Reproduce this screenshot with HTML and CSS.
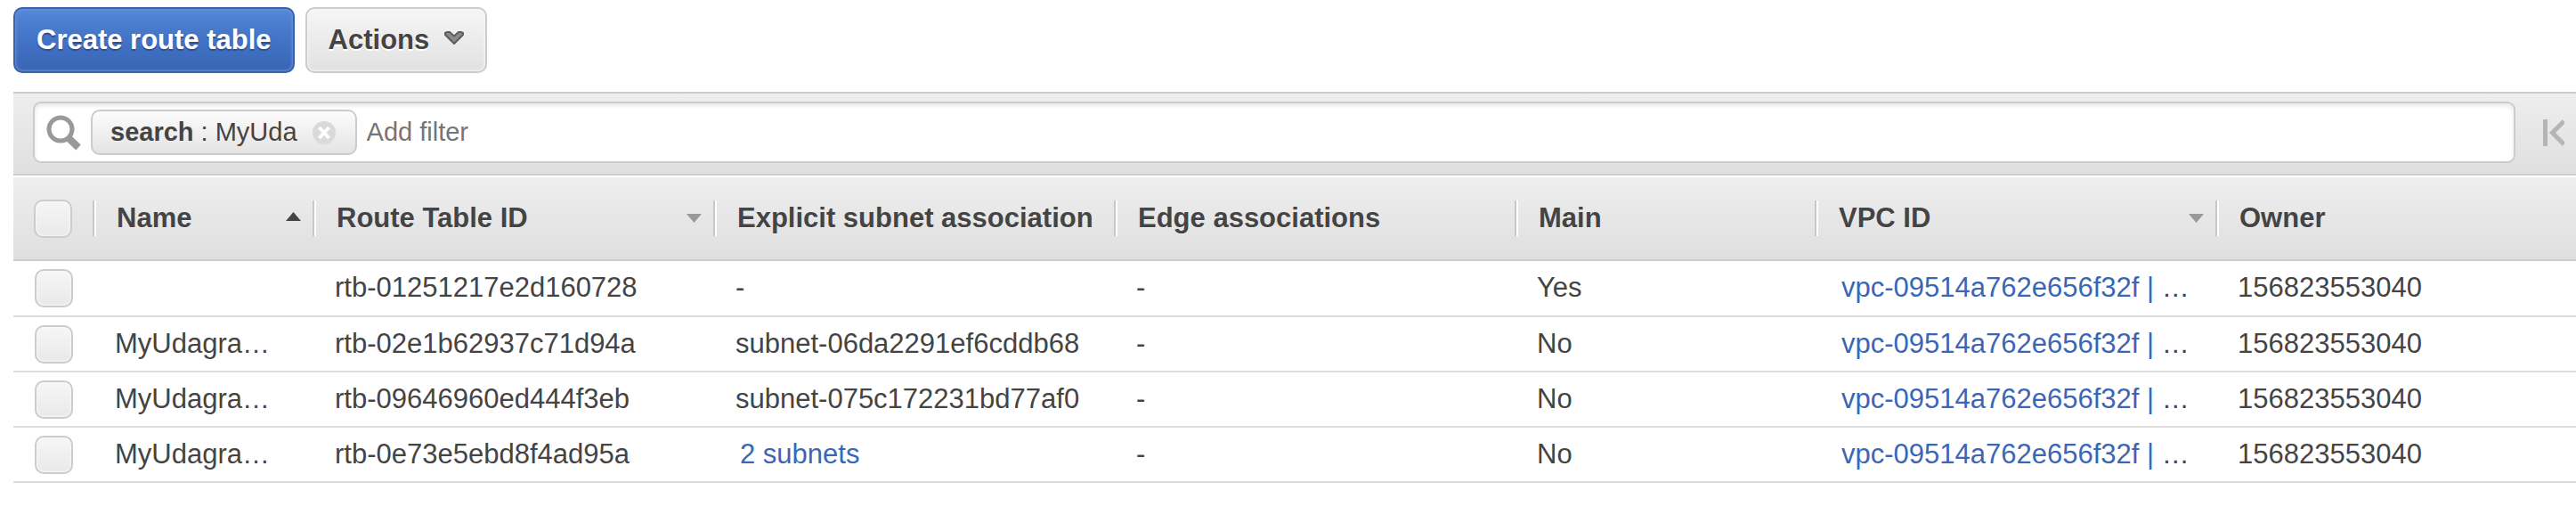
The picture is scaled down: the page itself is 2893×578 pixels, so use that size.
FILE: index.html
```html
<!DOCTYPE html>
<html lang="en">
<head>
<meta charset="utf-8">
<title>Route tables</title>
<link rel="stylesheet" href="styles.css">
</head>
<body>
<main class="console">
  <div class="actions">
    <button type="button" class="btn btn-primary">Create route table</button>
    <button type="button" class="btn btn-default">Actions
      <svg class="chevron" viewBox="0 0 22 15" aria-hidden="true"><path d="M1 2 L3 1 L6 1 L11 5.500 L16 1 L19 1 L21 2 L21 4 L11 14 L1 4 Z"/></svg>
    </button>
  </div>

  <div class="filter-bar">
    <div class="search-box">
      <svg class="magnifier" viewBox="0 0 40 40" aria-hidden="true"><circle cx="16" cy="16" r="13"/><path class="handle" d="M25 26 L36 36.500"/></svg>
      <span class="chip"><span class="chip-text"><b>search</b> : MyUda</span>
        <button type="button" class="chip-remove" aria-label="Remove filter">
          <svg viewBox="0 0 26 26" aria-hidden="true"><circle cx="13" cy="13" r="13"/><path d="M7.500 7 L18.500 19 M18.500 7 L7.500 19"/></svg>
        </button>
      </span>
      <input class="filter-input" type="text" placeholder="Add filter" aria-label="Add filter">
    </div>
    <button type="button" class="pager" aria-label="First page">
      <svg viewBox="0 0 24 30" aria-hidden="true"><path d="M2.500 0 V30"/><path d="M23.500 2 L10.500 15 L23.500 28"/></svg>
    </button>
  </div>

  <table class="grid">
    <colgroup>
      <col class="col-check"><col class="col-name"><col class="col-wide"><col class="col-wide"><col class="col-wide"><col class="col-main"><col class="col-wide"><col>
    </colgroup>
    <thead>
      <tr>
        <th class="check-cell"><input type="checkbox" class="check" aria-label="Select all"></th>
        <th><button type="button" class="head"><span class="label">Name</span><svg class="sort sorted" viewBox="0 0 17 10" aria-hidden="true"><path d="M0 10 L8.500 0 L17 10 Z"/></svg></button></th>
        <th><button type="button" class="head"><span class="label">Route Table ID</span><svg class="sort" viewBox="0 0 17 10" aria-hidden="true"><path d="M0 0 H17 L8.500 10 Z"/></svg></button></th>
        <th><div class="head plain"><span class="label">Explicit subnet associations</span></div></th>
        <th><div class="head plain"><span class="label">Edge associations</span></div></th>
        <th><div class="head plain"><span class="label">Main</span></div></th>
        <th><button type="button" class="head"><span class="label">VPC ID</span><svg class="sort" viewBox="0 0 17 10" aria-hidden="true"><path d="M0 0 H17 L8.500 10 Z"/></svg></button></th>
        <th><div class="head plain"><span class="label">Owner</span></div></th>
      </tr>
    </thead>
    <tbody>
      <tr>
        <td class="check-cell"><input type="checkbox" class="check" aria-label="Select rtb-01251217e2d160728"></td>
        <td></td><td>rtb-01251217e2d160728</td><td>-</td><td>-</td><td>Yes</td>
        <td><a href="#vpc">vpc-09514a762e656f32f |</a> …</td><td>156823553040</td>
      </tr>
      <tr>
        <td class="check-cell"><input type="checkbox" class="check" aria-label="Select rtb-02e1b62937c71d94a"></td>
        <td>MyUdagra…</td><td>rtb-02e1b62937c71d94a</td><td>subnet-06da2291ef6cddb68</td><td>-</td><td>No</td>
        <td><a href="#vpc">vpc-09514a762e656f32f |</a> …</td><td>156823553040</td>
      </tr>
      <tr>
        <td class="check-cell"><input type="checkbox" class="check" aria-label="Select rtb-09646960ed444f3eb"></td>
        <td>MyUdagra…</td><td>rtb-09646960ed444f3eb</td><td>subnet-075c172231bd77af0</td><td>-</td><td>No</td>
        <td><a href="#vpc">vpc-09514a762e656f32f |</a> …</td><td>156823553040</td>
      </tr>
      <tr>
        <td class="check-cell"><input type="checkbox" class="check" aria-label="Select rtb-0e73e5ebd8f4ad95a"></td>
        <td>MyUdagra…</td><td>rtb-0e73e5ebd8f4ad95a</td><td><a href="#subnets">2 subnets</a></td><td>-</td><td>No</td>
        <td><a href="#vpc">vpc-09514a762e656f32f |</a> …</td><td>156823553040</td>
      </tr>
    </tbody>
  </table>
</main>
</body>
</html>
```
FILE: styles.css
```css
* { box-sizing: border-box; }

body {
  margin: 0;
  background: #fff;
  color: #444;
  font: 31px/36px "Liberation Sans", Arial, sans-serif;
}

button, input { font: inherit; color: inherit; }

.console { padding: 8px 0 0 15px; }

.actions {
  display: flex;
  gap: 12px;
  margin-bottom: 21px;
}

.btn {
  display: flex;
  align-items: center;
  height: 74px;
  padding: 0 24px;
  border: 2px solid #ccc;
  border-radius: 10px;
  font-weight: bold;
  white-space: nowrap;
}

.btn-primary {
  background: linear-gradient(#5488d8, #4475c8 45%, #3864b4);
  border-color: #3862ae;
  box-shadow: inset 0 0 3px 1px #6a94da;
  color: #fff;
  text-shadow: 0 2px 1px #2a4f94;
}

.btn-default {
  gap: 17px;
  background: linear-gradient(#f6f6f6, #e1e1e1);
  box-shadow: inset 0 0 2px 1px #f7f7f7;
  text-shadow: 0 2px 0 #fff;
}

.chevron {
  width: 22px;
  height: 15px;
  margin-bottom: 5px;
  fill: #8a8a8a;
  stroke: #5c5c5c;
  stroke-width: 2;
}

.filter-bar {
  display: flex;
  align-items: flex-start;
  height: 94px;
  padding: 9px 13px 0 22px;
  border-top: 2px solid #ccc;
  border-bottom: 2px solid #ccc;
  background: linear-gradient(#eee, #dfdfdf);
}

.search-box {
  display: flex;
  flex: 1;
  align-items: center;
  height: 69px;
  padding-left: 13px;
  border: 2px solid #ccc;
  border-radius: 9px;
  background: #fff;
  box-shadow: inset 0 3px 5px #e8e8e8;
  font-size: 29px;
}

.magnifier {
  width: 40px;
  height: 40px;
  margin-right: 10px;
  fill: none;
  stroke: #999;
  stroke-width: 5;
}

.magnifier .handle { stroke-width: 8; }

.chip {
  display: flex;
  align-items: center;
  gap: 17px;
  height: 51px;
  padding: 0 22px 0 20px;
  border: 2px solid #ccc;
  border-radius: 10px;
  background: linear-gradient(#fcfcfc, #e4e4e4);
  white-space: nowrap;
}

.chip-text { padding-bottom: 2px; }

.chip-remove {
  display: flex;
  padding: 0;
  border: 0;
  background: none;
}

.chip-remove svg {
  width: 26px;
  height: 26px;
  fill: #dadada;
  stroke: #fff;
  stroke-width: 4;
}

.chip-remove circle { stroke: none; }

.filter-input {
  flex: 1;
  min-width: 0;
  padding: 0 11px 2px;
  border: 0;
  outline: 0;
  background: none;
}

.filter-input::placeholder { color: #757575; opacity: 1; }

.pager {
  display: flex;
  margin: 20px 0 0 31px;
  padding: 0;
  border: 0;
  background: none;
}

.pager svg {
  width: 24px;
  height: 30px;
  fill: none;
  stroke: #b5b5b5;
  stroke-width: 5;
}

.grid {
  width: 100%;
  table-layout: fixed;
  border-spacing: 0;
}

.col-check { width: 89px; }
.col-name { width: 247px; }
.col-wide { width: 450px; }
.col-main { width: 337px; }

.grid th {
  height: 96px;
  padding: 0;
  border-top: 2px solid #fff;
  border-bottom: 2px solid #ccc;
  background: linear-gradient(#eee, #dfdfdf);
  text-align: left;
}

.head {
  display: flex;
  align-items: center;
  width: 100%;
  height: 40px;
  padding: 0 13px 0 22px;
  border: 0;
  border-left: 2px solid #c8c8c8;
  background: none;
  box-shadow: inset 2px 0 0 #fff;
  font-weight: bold;
  text-align: left;
}

.head.plain { padding-right: 23px; }

.label {
  flex: 1;
  overflow: hidden;
  padding-left: 3px;
  white-space: nowrap;
  text-shadow: 0 1px 0 #f4f4f4;
}

.sort {
  width: 17px;
  height: 10px;
  fill: #999;
}

.sort.sorted { margin-bottom: 4px; fill: #444; }

.grid td {
  height: 62px;
  padding: 0 0 1px 25px;
  border-bottom: 2px solid #dedede;
  white-space: nowrap;
}

.grid tbody tr:first-child td { height: 63px; }

.grid .check-cell { padding: 0 0 0 23px; }

.grid td.check-cell { padding-left: 24px; }

.check {
  display: block;
  appearance: none;
  width: 43px;
  height: 43px;
  margin: 0;
  border: 2px solid #ccc;
  border-radius: 10px;
  background: linear-gradient(#f6f6f6, #e9e9e9);
  box-shadow: inset 0 0 2px 1px #f8f8f8;
}

.grid a {
  padding-left: 5px;
  color: #3b66b5;
  text-decoration: none;
}
```
